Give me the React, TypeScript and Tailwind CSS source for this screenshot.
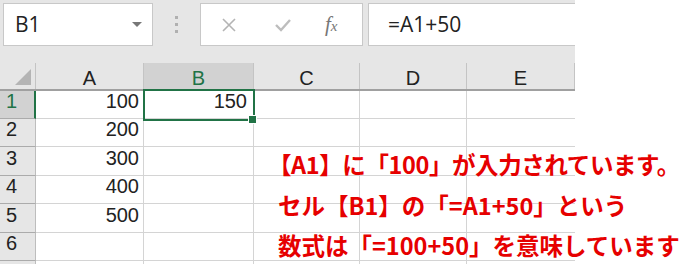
import type { ReactElement } from "react";

const columns = [
  { label: "A", width: "w-[108px]" },
  { label: "B", width: "w-[110px]" },
  { label: "C", width: "w-[106px]" },
  { label: "D", width: "w-[107px]" },
  { label: "E", width: "w-[108px]" },
];

const rows = [
  { num: "1", a: "100", b: "150", height: "h-[28px]" },
  { num: "2", a: "200", b: "", height: "h-[28px]" },
  { num: "3", a: "300", b: "", height: "h-[29px]" },
  { num: "4", a: "400", b: "", height: "h-[28px]" },
  { num: "5", a: "500", b: "", height: "h-[29px]" },
  { num: "6", a: "", b: "", height: "h-[28px]" },
  { num: "", a: "", b: "", height: "h-[28px]" },
];

const NameBox = (): ReactElement => (
  <div className="ml-[3px] mt-[3px] w-[150px] h-[43px] bg-white border border-[#c8c8c8] flex items-center justify-between pl-[11px] pr-[10px]">
    <span className="text-[21px] text-[#222] font-['Open_Sans',sans-serif]">B1</span>
    <span className="w-0 h-0 border-l-[5px] border-r-[5px] border-t-[5px] border-l-transparent border-r-transparent border-t-[#777]" />
  </div>
);

const FormulaButtons = (): ReactElement => (
  <div className="mt-[3px] w-[163px] h-[43px] bg-white border border-[#c8c8c8] flex items-center">
    <svg className="ml-[20px]" width="16" height="16" viewBox="0 0 16 16">
      <path d="M2 2 L14 14 M14 2 L2 14" stroke="#b4b4b4" strokeWidth="1.6" fill="none" />
    </svg>
    <svg className="ml-[37px]" width="18" height="16" viewBox="0 0 18 16">
      <path d="M2 8 L7 13 L16 3" stroke="#bdbdbd" strokeWidth="2.4" fill="none" />
    </svg>
    <span className="ml-[33px] font-['Liberation_Serif',serif] italic text-[#777] text-[21px] leading-none">
      f<span className="text-[15px]">x</span>
    </span>
  </div>
);

export default function App(): ReactElement {
  return (
    <div className="relative w-[680px] h-[264px] overflow-hidden bg-white">
      <div className="w-[575px]">
        {/* formula bar */}
        <div className="h-[63px] bg-[#e6e6e6] flex">
          <NameBox />
          <div className="w-[47px] pt-[16px] flex flex-col items-center gap-[4px]">
            <span className="w-[3px] h-[3px] bg-[#b0b0b0]" />
            <span className="w-[3px] h-[3px] bg-[#b0b0b0]" />
            <span className="w-[3px] h-[3px] bg-[#b0b0b0]" />
          </div>
          <FormulaButtons />
          <div className="ml-[5px] mt-[3px] flex-1 h-[43px] bg-white border border-r-0 border-[#c8c8c8] flex items-center pl-[19px]">
            <span className="text-[21px] text-[#222] font-['Open_Sans',sans-serif]">=A1+50</span>
          </div>
        </div>

        {/* column headers */}
        <div className="flex h-[28px] bg-[#e6e6e6] border-b-2 border-[#a0a0a0] font-['Liberation_Sans',sans-serif]">
          <div className="w-[36px] border-r border-[#c4c4c4] flex items-end justify-end pr-[4px] pb-[4px]">
            <span className="w-0 h-0 border-l-[16px] border-t-[16px] border-l-transparent border-t-transparent border-r-0 border-b-0 [border-bottom:16px_solid_#b4b4b4]" />
          </div>
          {columns.map((col) => (
            <div
              key={col.label}
              className={`${col.width} border-r border-[#c4c4c4] flex items-center justify-center pt-[4px] text-[20px] ${
                col.label === "B" ? "bg-[#d2d2d2] text-[#217346] border-b-2 border-b-[#217346] -mb-[2px]" : "text-[#222]"
              }`}
            >
              {col.label}
            </div>
          ))}
        </div>

        {/* rows */}
        <div className="font-['Liberation_Sans',sans-serif] text-[20px]">
          {rows.map((row, i) => (
            <div key={i} className={`flex ${row.height}`}>
              <div
                className={`w-[36px] border-b border-[#ababab] flex items-end pl-[6px] pb-[2px] ${
                  row.num === "1"
                    ? "bg-[#d2d2d2] text-[#217346] border-r-2 border-r-[#217346]"
                    : "bg-[#e6e6e6] text-[#222] border-r border-r-[#bdbdbd]"
                }`}
              >
                {row.num}
              </div>
              <div className="w-[108px] border-r border-b border-[#d4d4d4] flex items-end justify-end pr-[4px] pb-[2px] text-[#222]">
                {row.a}
              </div>
              <div className="w-[110px] border-r border-b border-[#d4d4d4] flex items-end justify-end pr-[6px] pb-[2px] text-[#222]">
                {row.b}
              </div>
              <div className="w-[106px] border-r border-b border-[#d4d4d4]" />
              <div className="w-[107px] border-r border-b border-[#d4d4d4]" />
              <div className="w-[108px] border-b border-[#d4d4d4]" />
            </div>
          ))}
        </div>
      </div>

      {/* active cell selection */}
      <div className="absolute left-[143px] top-[89px] w-[112px] h-[32px] border-2 border-[#217346]" />
      <div className="absolute left-[248px] top-[115px] w-[9px] h-[9px] bg-[#217346] border border-white" />

      {/* annotation */}
      <div className="absolute left-[278px] top-[144px] font-['Noto_Sans_CJK_JP',sans-serif] font-bold text-[23.5px] leading-[40.5px] text-[#e60000] whitespace-nowrap">
        <div className="-ml-[10px] tracking-[-0.4px]">【A1】に「100」が入力されています。</div>
        <div>セル【B1】の「=A1+50」という</div>
        <div>数式は「=100+50」を意味しています</div>
      </div>
    </div>
  );
}
